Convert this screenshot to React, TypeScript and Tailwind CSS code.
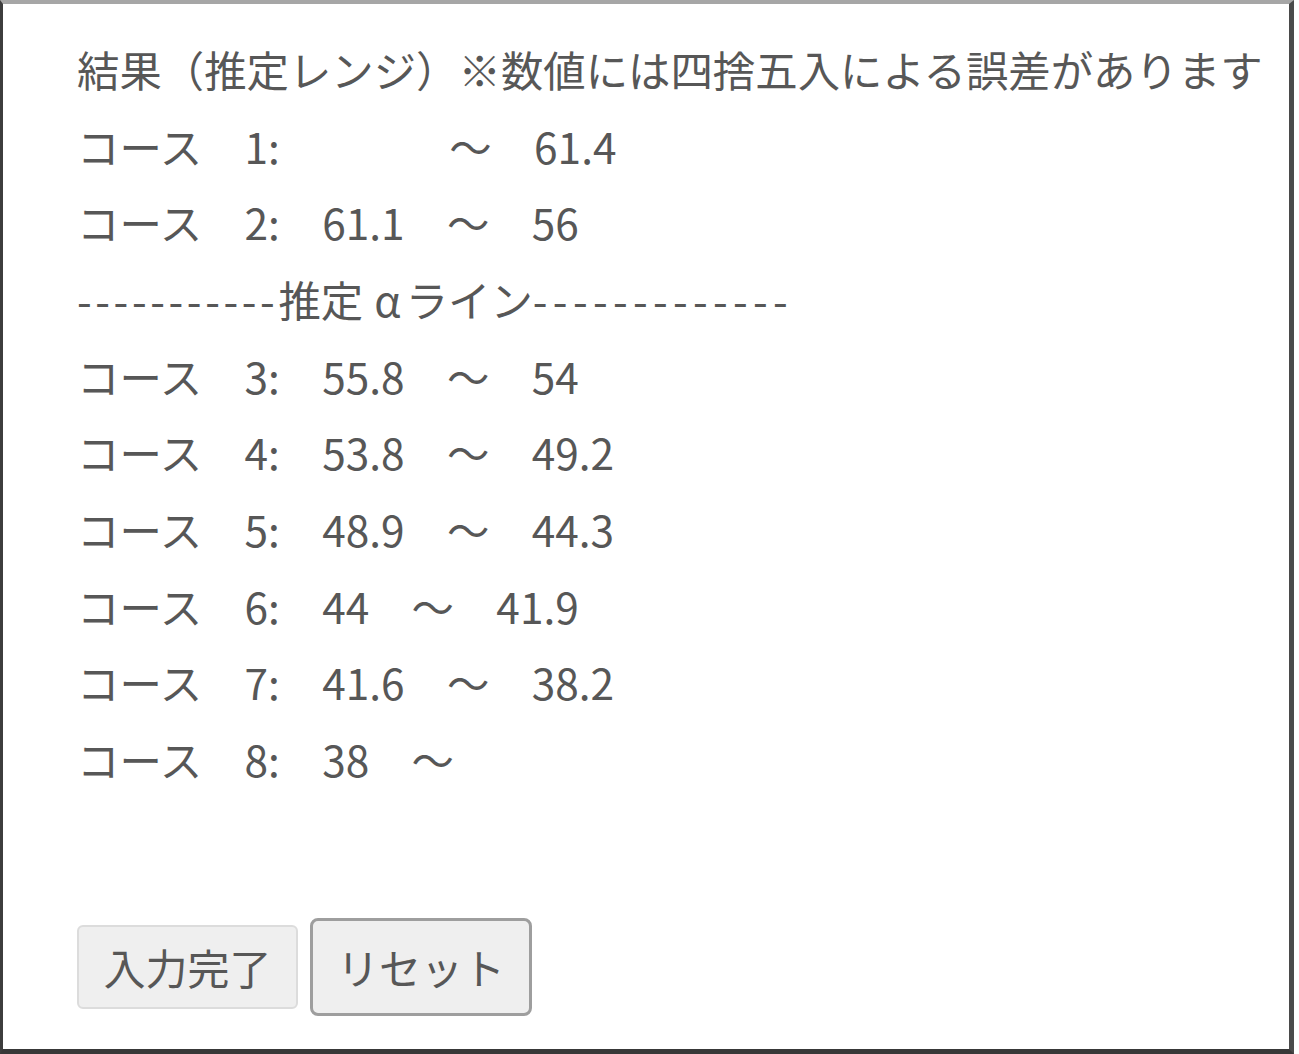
import React from "react";

type Row = { n: number; from: string; to: string };

const rows: Row[] = [
  { n: 1, from: "", to: "61.4" },
  { n: 2, from: "61.1", to: "56" },
  { n: 3, from: "55.8", to: "54" },
  { n: 4, from: "53.8", to: "49.2" },
  { n: 5, from: "48.9", to: "44.3" },
  { n: 6, from: "44", to: "41.9" },
  { n: 7, from: "41.6", to: "38.2" },
  { n: 8, from: "38", to: "" },
];

const SP = "\u3000";

function line(r: Row) {
  // an empty lower bound still takes up its slot, so the tilde lines up
  const from = r.from === "" ? SP + SP : r.from;
  return `コース${SP}${r.n}:${SP}${from}${SP}～${SP}${r.to}`;
}

export default function App() {
  return (
    <div className="w-[1299px] h-[1054px] bg-white">
      <div
        className="w-[1294px] h-[1054px] border-t-[4px] border-l-[3px] border-r-[5px] border-b-[5px] border-t-[#a6a6a6] border-l-[#3d3d3d] border-r-[#4a4a4a] border-b-[#383838] pl-[74px] pt-[27px] text-[#575757] text-[42.4px] leading-[76.67px]"
        style={{ fontFamily: '"Noto Sans CJK JP", "Noto Sans", sans-serif' }}
      >
        <div className="whitespace-pre">結果（推定レンジ）※数値には四捨五入による誤差があります</div>
        {rows.slice(0, 2).map((r) => (
          <div key={r.n} className="whitespace-pre">
            {line(r)}
          </div>
        ))}
        <div className="whitespace-pre">
          <span className="tracking-[3.6px]">-----------</span>
          <span>推定</span>
          <span className="pl-[11px] pr-[5px]">α</span>
          <span>ライン</span>
          <span className="tracking-[5.3px]">-------------</span>
        </div>
        {rows.slice(2).map((r) => (
          <div key={r.n} className="whitespace-pre">
            {line(r)}
          </div>
        ))}
        <div className="mt-[120px] flex items-center gap-[12px]">
          <button className="h-[84px] w-[221px] rounded-[6px] border-[2px] border-[#dcdcdc] bg-[#efefef] text-[#575757] text-[42px] leading-none">
            入力完了
          </button>
          <button className="h-[98px] w-[222px] rounded-[8px] border-[3px] border-[#9e9e9e] bg-[#efefef] text-[#575757] text-[42px] leading-none">
            リセット
          </button>
        </div>
      </div>
    </div>
  );
}
